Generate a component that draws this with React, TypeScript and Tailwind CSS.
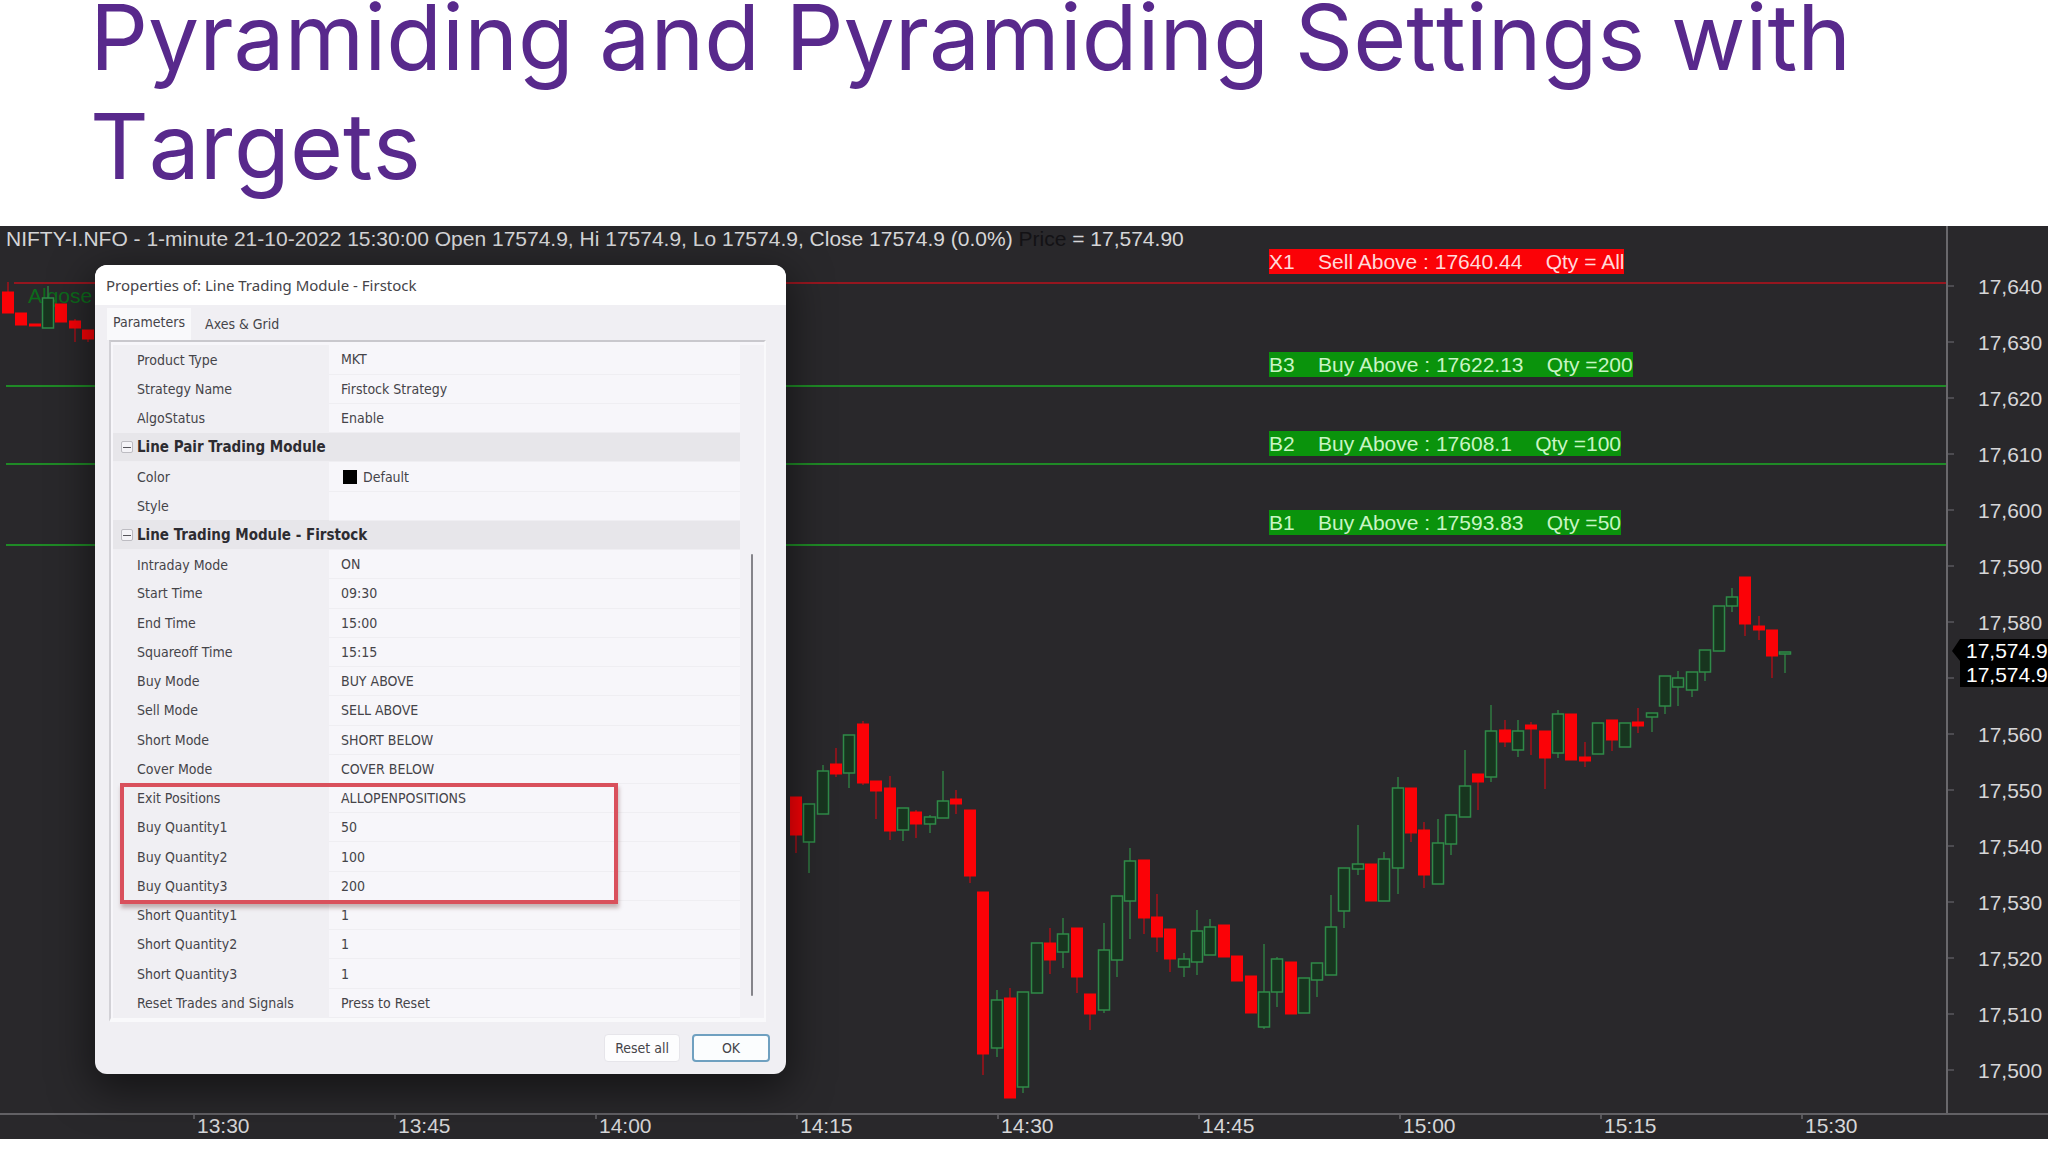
import { Fragment } from 'react';

type Candle = {
  up: boolean;
  top: number;
  bottom: number;
  high: number;
  low: number;
};

const up = (top: number, bottom: number, high = top, low = bottom): Candle => ({ up: true, top, bottom, high, low });
const down = (top: number, bottom: number, high = top, low = bottom): Candle => ({ up: false, top, bottom, high, low });

const CANDLE_STEP = 13.37;
const CANDLE_WIDTH = 11;

const MORNING_CANDLES: Candle[] = [
  down(66, 87, 56, 87),
  down(87, 99),
  down(98, 100),
  up(72, 102, 60, 102),
  down(78, 96),
  down(95, 102, 93, 116),
  down(104, 113, 104, 116),
];

const AFTERNOON_CANDLES: Candle[] = [
  down(571, 609, 571, 627),
  up(578, 616, 578, 647),
  up(545, 588, 539),
  down(538, 548, 522, 551),
  up(509, 547, 509, 562),
  down(498, 557, 495, 559),
  down(555, 565, 555, 593),
  down(562, 605, 550, 614),
  up(582, 604, 582, 615),
  down(586, 598, 584, 612),
  up(591, 598, 589, 607),
  up(575, 592, 545),
  down(573, 578, 564, 588),
  down(584, 650, 584, 657),
  down(666, 828, 666, 849),
  up(774, 822, 764, 831),
  down(772, 872, 762),
  up(766, 861, 766, 867),
  up(717, 767),
  down(717, 734, 702, 748),
  up(708, 726, 692, 742),
  down(702, 751, 702, 767),
  down(768, 788, 768, 804),
  up(724, 784, 697, 787),
  up(670, 734, 670, 751),
  up(635, 675, 622, 713),
  down(634, 692, 634, 708),
  down(691, 711, 668, 726),
  down(703, 733, 703, 746),
  up(733, 741, 727, 751),
  up(705, 736, 684, 749),
  up(701, 729, 693),
  down(699, 731),
  down(730, 755),
  down(750, 787),
  up(766, 801, 718, 803),
  up(733, 766, 731, 781),
  down(736, 788),
  up(752, 787),
  up(737, 754, 737, 771),
  up(701, 749, 669),
  up(642, 685, 642, 702),
  up(638, 643, 599, 649),
  down(638, 675),
  up(633, 675, 626),
  up(562, 642, 551, 668),
  down(562, 607, 562, 616),
  down(604, 649, 596, 662),
  up(617, 658, 593),
  up(589, 618, 589, 629),
  up(560, 591, 524),
  down(548, 556, 548, 584),
  up(505, 551, 479, 556),
  down(504, 516, 494, 521),
  up(505, 524, 494, 531),
  down(499, 503, 496, 529),
  down(505, 532, 505, 563),
  up(488, 527, 484, 532),
  down(488, 534),
  down(531, 535, 516, 541),
  up(497, 528),
  down(494, 514, 494, 525),
  up(497, 521),
  down(496, 500, 482, 507),
  up(487, 491, 487, 506),
  up(450, 480, 450, 488),
  up(452, 461, 445, 480),
  up(446, 464, 446, 471),
  up(424, 446, 424, 455),
  up(380, 425),
  up(371, 380, 362, 386),
  down(351, 398, 351, 410),
  down(400, 404, 390, 414),
  down(404, 430, 404, 452),
  up(426, 428, 426, 447),
];

const PRICES = [
  '17,640', '17,630', '17,620', '17,610', '17,600', '17,590', '17,580', '17,570',
  '17,560', '17,550', '17,540', '17,530', '17,520', '17,510', '17,500',
];

const TIMES = ['13:30', '13:45', '14:00', '14:15', '14:30', '14:45', '15:00', '15:15', '15:30'];

const GROUPS = [
  {
    title: '',
    rows: [
      ['Product Type', 'MKT'],
      ['Strategy Name', 'Firstock Strategy'],
      ['AlgoStatus', 'Enable'],
    ],
  },
  {
    title: 'Line Pair Trading Module',
    rows: [
      ['Color', 'Default'],
      ['Style', ''],
    ],
  },
  {
    title: 'Line Trading Module - Firstock',
    rows: [
      ['Intraday Mode', 'ON'],
      ['Start Time', '09:30'],
      ['End Time', '15:00'],
      ['Squareoff Time', '15:15'],
      ['Buy Mode', 'BUY ABOVE'],
      ['Sell Mode', 'SELL ABOVE'],
      ['Short Mode', 'SHORT BELOW'],
      ['Cover Mode', 'COVER BELOW'],
      ['Exit Positions', 'ALLOPENPOSITIONS'],
      ['Buy Quantity1', '50'],
      ['Buy Quantity2', '100'],
      ['Buy Quantity3', '200'],
      ['Short Quantity1', '1'],
      ['Short Quantity2', '1'],
      ['Short Quantity3', '1'],
      ['Reset Trades and Signals', 'Press to Reset'],
    ],
  },
];

function Candles({ data, start }: { data: Candle[]; start: number }) {
  return (
    <>
      {data.map((c, i) => {
        const x = Math.round(start + i * CANDLE_STEP);
        const color = c.up ? '#2f8a48' : '#fb0207';
        return (
          <g key={i}>
            {c.high < c.top && (
              <line x1={x} x2={x} y1={c.high} y2={c.top} stroke={c.up ? '#2f7a42' : '#a5101a'} strokeWidth={1.5} />
            )}
            {c.low > c.bottom && (
              <line x1={x} x2={x} y1={c.bottom} y2={c.low} stroke={c.up ? '#2f7a42' : '#a5101a'} strokeWidth={1.5} />
            )}
            <rect
              x={x - CANDLE_WIDTH / 2}
              y={c.top}
              width={CANDLE_WIDTH}
              height={c.bottom - c.top}
              fill={c.up ? '#18351f' : color}
              stroke={color}
              strokeWidth={c.up ? 1.5 : 1}
            />
          </g>
        );
      })}
    </>
  );
}

function ChartDrawing() {
  return (
    <svg className="absolute inset-0 h-full w-full" aria-hidden="true">
      <line x1={14} x2="100%" y1={57} y2={57} stroke="#95161f" strokeWidth={2} />
      {[160, 238, 319].map((y) => (
        <line key={y} x1={6} x2="100%" y1={y} y2={y} stroke="#1f8a26" strokeWidth={2} />
      ))}
      <Candles data={MORNING_CANDLES} start={8} />
      <Candles data={AFTERNOON_CANDLES} start={796} />
    </svg>
  );
}

function PropertyTable() {
  return (
    <table className="h-[673px] w-full border-collapse text-left text-[14px] leading-4 text-[#454449]">
      <tbody>
        {GROUPS.map((group) => (
          <Fragment key={group.title}>
            {group.title && (
              <tr className="h-7 bg-[#e7e6ea]">
                <th colSpan={2} className="border-b border-[#efeef2] py-0 pl-2 text-[15px] font-bold text-[#2d2c31]">
                  <div className="flex items-center gap-1">
                    <button type="button" aria-label={`Collapse ${group.title}`}
                      className="flex h-3 w-3 items-center justify-center rounded-xs border border-[#bdbcc2] bg-[#f4f3f7]">
                      <span className="h-px w-2 bg-[#55545a]" />
                    </button>
                    {group.title}
                  </div>
                </th>
              </tr>
            )}
            {group.rows.map(([name, value]) => (
              <tr key={name} className="h-7">
                <th scope="row" className="w-[216px] bg-[#f0eff3] py-0 pl-6 font-normal">{name}</th>
                <td className="border-b border-[#efeef2] py-0 pl-3">
                  {name === 'Color' ? (
                    <span className="flex items-center gap-1.5 pl-0.5">
                      <span className="h-3.5 w-3.5 bg-black" />
                      {value}
                    </span>
                  ) : value}
                </td>
              </tr>
            ))}
          </Fragment>
        ))}
      </tbody>
    </table>
  );
}

function PropertiesDialog() {
  return (
    <div role="dialog" aria-label="Properties"
      className="absolute left-[95px] top-[39px] w-[691px] overflow-hidden rounded-xl bg-[#f0eff3] font-['DejaVu_Sans_Condensed','DejaVu_Sans',sans-serif] text-[14px] text-[#454449] shadow-[0_12px_40px_4px_rgba(0,0,0,0.5)]">
      <div className="flex h-10 items-center bg-white pl-[11px] font-['Noto_Sans',sans-serif] text-[15px]">
        Properties of: Line Trading Module - Firstock
      </div>

      {/* Tabs */}
      <div role="tablist" className="flex h-[35px] items-end pl-3">
        <button type="button" role="tab" aria-selected="true" className="h-8 bg-[#f9f9fb] px-1.5 pb-1">Parameters</button>
        <button type="button" role="tab" aria-selected="false" className="h-8 px-3.5">Axes &amp; Grid</button>
      </div>

      {/* Property grid */}
      <div className="relative ml-3.5 mr-5 flex border-2 border-b-4 border-[#f9f9fb] border-l-[#d2d1d6] border-t-[#c9c8cd] bg-[#f7f6fa] pt-[3px]">
        <div className="flex-1 pl-0.5">
          <PropertyTable />
        </div>
        <div className="flex w-6 justify-center bg-[#f2f1f5] pt-[209px]">
          <div className="h-[442px] w-0.5 rounded bg-[#85848a]" />
        </div>
        <div className="absolute left-[9px] top-[441px] h-[121px] w-[498px] border-4 border-[#d9505c] shadow-[1px_4px_4px_rgba(120,80,80,0.4)]" />
      </div>

      <div className="flex justify-end gap-3 px-4 pb-3 pt-3">
        <button type="button" className="h-7 rounded border border-[#e6e5ea] bg-[#fdfdfe] px-2.5">Reset all</button>
        <button type="button" className="h-7 w-[78px] rounded border-2 border-[#6fa0c0] bg-[#fbfdfe]">OK</button>
      </div>
    </div>
  );
}

export default function App() {
  return (
    <div className="min-h-screen overflow-hidden bg-white">
      <h1 className="-mt-[17px] pb-[25px] pl-[90px] pr-20 font-['Inter',sans-serif] text-[91px] leading-[109px] text-[#58298c] [font-kerning:none]">
        Pyramiding and Pyramiding Settings with Targets
      </h1>

      <main className="bg-[#29282b] font-['Liberation_Sans',Arial,sans-serif] text-[21px] leading-[25px] text-[#d6d6d8]">
        <div className="flex border-b-2 border-[#626165]">
          {/* Plot area */}
          <div className="relative min-w-0 flex-1">
            <div className="absolute left-[28px] top-[57px] text-[#0c6b1b]">Algose</div>
            <ChartDrawing />
            <p className="relative whitespace-nowrap pl-1.5">
              NIFTY-I.NFO - 1-minute 21-10-2022 15:30:00 Open 17574.9, Hi 17574.9, Lo 17574.9, Close 17574.9 (0.0%){' '}
              <span className="text-[#131215]">Price</span> = 17,574.90
            </p>
            <div className="absolute left-[1269px] top-[23px] whitespace-pre bg-[#fb0207] text-[#ffd9d9]">X1    Sell Above : 17640.44    Qty = All</div>
            <div className="absolute left-[1269px] top-[126px] whitespace-pre bg-[#0a930c] text-[#c8f5c4]">B3    Buy Above : 17622.13    Qty =200</div>
            <div className="absolute left-[1269px] top-[205px] whitespace-pre bg-[#0a930c] text-[#c8f5c4]">B2    Buy Above : 17608.1    Qty =100</div>
            <div className="absolute left-[1269px] top-[284px] whitespace-pre bg-[#0a930c] text-[#c8f5c4]">B1    Buy Above : 17593.83    Qty =50</div>
            <PropertiesDialog />
          </div>

          {/* Price axis */}
          <div className="w-[102px] border-l-2 border-[#69686c] pb-[15px] pt-8">
            {PRICES.map((price) => (
              <div key={price} className="relative flex h-14 items-center">
                <span className="h-0.5 w-1.5 bg-[#4c4b50]" />
                {price === '17,570' ? (
                  <div className="absolute -top-[11px] left-1 flex w-24 overflow-hidden leading-6 text-white">
                    <svg className="h-12 w-3 shrink-0" viewBox="0 0 12 48" aria-hidden="true">
                      <path d="M0 12 8 0h4v48H8V22Z" fill="#000" />
                    </svg>
                    <div className="bg-black pl-0.5">
                      <div>17,574.9</div>
                      <div>17,574.9</div>
                    </div>
                  </div>
                ) : (
                  <span className="pl-6">{price}</span>
                )}
              </div>
            ))}
          </div>
        </div>

        {/* Time axis */}
        <div className="flex h-6 overflow-hidden pl-[193px]">
          {TIMES.map((time) => (
            <div key={time} className="flex w-[201px] shrink-0">
              <span className="h-1 w-0.5 bg-[#58575b]" />
              <span className="pl-0.5 leading-[22px]">{time}</span>
            </div>
          ))}
        </div>
      </main>
    </div>
  );
}
